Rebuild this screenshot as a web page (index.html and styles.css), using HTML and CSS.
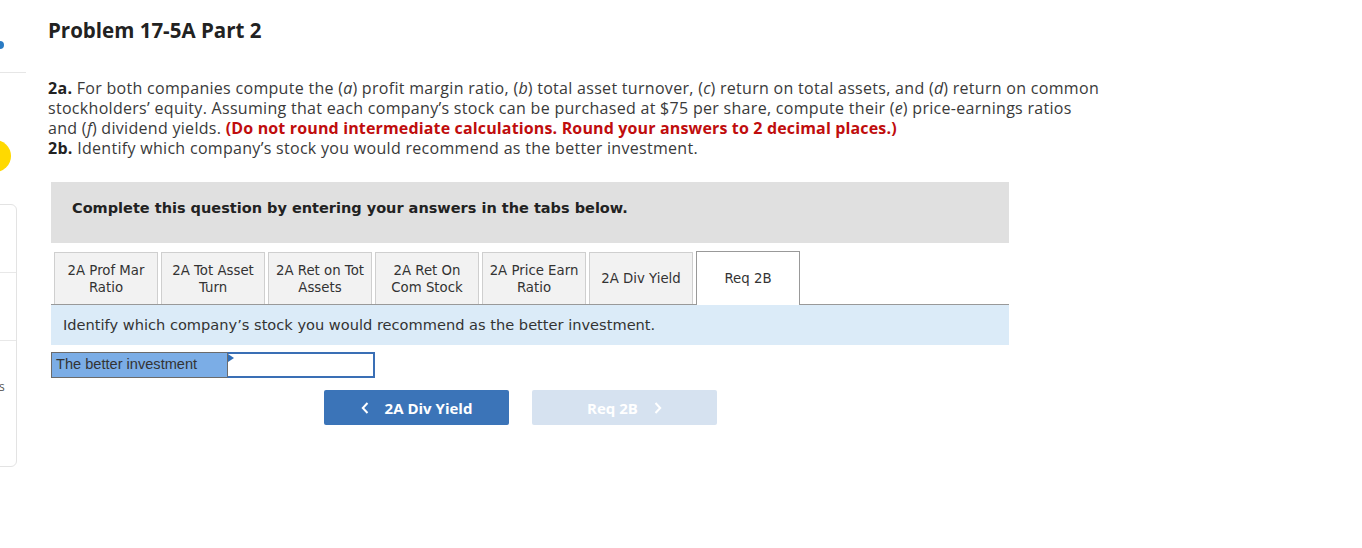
FILE: index.html
```html
<!DOCTYPE html>
<html lang="en">
<head>
<meta charset="utf-8">
<title>Problem 17-5A Part 2</title>
<link rel="stylesheet" href="styles.css">
</head>
<body>
<div class="page">
  <aside class="rail">
    <span class="dot"></span>
    <span class="rule"></span>
    <span class="sun"></span>
    <div class="card">
      <div class="cell"></div>
      <div class="cell"></div>
      <div class="cell last"><span class="s">s</span></div>
    </div>
  </aside>
  <main class="main">
    <h1 class="title">Problem 17-5A Part 2</h1>
    <p class="prompt"><b>2a.</b> For both companies compute the (<i>a</i>) profit margin ratio, (<i>b</i>) total asset turnover, (<i>c</i>) return on total assets, and (<i>d</i>) return on common stockholders’ equity. Assuming that each company’s stock can be purchased at $75 per share, compute their (<i>e</i>) price-earnings ratios and (<i>f</i>) dividend yields. <strong class="warn">(Do not round intermediate calculations. Round your answers to 2 decimal places.)</strong><br><b>2b.</b> Identify which company’s stock you would recommend as the better investment.</p>

    <section class="widget">
      <div class="banner">Complete this question by entering your answers in the tabs below.</div>
      <div class="tabs">
        <div class="tab">2A Prof Mar<br>Ratio</div>
        <div class="tab">2A Tot Asset<br>Turn</div>
        <div class="tab">2A Ret on Tot<br>Assets</div>
        <div class="tab">2A Ret On<br>Com Stock</div>
        <div class="tab">2A Price Earn<br>Ratio</div>
        <div class="tab">2A Div Yield</div>
        <div class="tab active">Req 2B</div>
      </div>
      <div class="info">Identify which company’s stock you would recommend as the better investment.</div>
      <div class="answer">
        <div class="label">The better investment</div>
        <div class="field"><span class="flag"></span></div>
      </div>
      <div class="nav">
        <button class="btn prev"><svg class="chev" width="8" height="12" viewBox="0 0 8 12"><path d="M6.5 1 L1.8 6 L6.5 11" fill="none" stroke="#fff" stroke-width="2"/></svg>2A Div Yield</button>
        <button class="btn next">Req 2B<svg class="chev" width="8" height="12" viewBox="0 0 8 12"><path d="M1.5 1 L6.2 6 L1.5 11" fill="none" stroke="#fff" stroke-width="2"/></svg></button>
      </div>
    </section>
  </main>
</div>
</body>
</html>
```

FILE: styles.css
```css
* { box-sizing: border-box; }
html, body { margin: 0; padding: 0; background: #fff; }
body { font-family: "Open Sans", "Liberation Sans", sans-serif; color: #333; overflow: hidden; }

.page { display: flex; width: 1362px; height: 548px; }

.rail { width: 48px; flex: none; display: flex; flex-direction: column; align-items: flex-start; }
.dot { display: block; width: 8px; height: 8px; border-radius: 50%; background: #2a7bc4; margin: 41px 0 0 -4px; }
.rule { display: block; width: 26px; height: 1px; background: #e6e6e6; margin-top: 23px; }
.sun { display: block; width: 32px; height: 32px; border-radius: 50%; background: #ffd900; margin: 67px 0 0 -21px; }
.card { width: 28px; margin: 32px 0 0 -11px; height: 263px; border: 1px solid #e3e3e3; border-radius: 6px; display: flex; flex-direction: column; }
.cell { height: 68px; border-bottom: 1px solid #e8e8e8; }
.cell.last { border-bottom: 0; flex: 1; padding: 37px 0 0 9px; font-size: 12px; color: #555; }

.main { flex: none; width: 1100px; }
.title { margin: 17px 0 0; font-size: 20.5px; font-weight: 700; color: #222; letter-spacing: 0; line-height: 26px; }
.prompt { margin: 35px 0 0; font-size: 16px; letter-spacing: 0.3px; line-height: 20px; color: #3a3a3a; width: 1054px; }
.prompt b { font-weight: 700; color: #222; }
.prompt i { letter-spacing: 0; }
.warn { color: #c00d0d; font-weight: 700; letter-spacing: 0.15px; }

.widget { margin-top: 24px; width: 958px; margin-left: 3px; }
.banner { background: #e0e0e0; height: 61px; padding: 18px 0 0 21px; font-family: "DejaVu Sans", Verdana, sans-serif; font-weight: 700; font-size: 14.5px; color: #222; }

.tabs { display: flex; align-items: flex-end; gap: 3px; margin-top: 8px; padding-left: 3px; border-bottom: 1px solid #999; }
.tab { width: 104px; height: 52px; background: #f2f2f2; border: 1px solid #cfcfcf; border-bottom: 0; display: flex; align-items: center; justify-content: center; text-align: center; font-family: "DejaVu Sans", Tahoma, sans-serif; font-size: 13.3px; line-height: 17px; color: #333; white-space: nowrap; }
.tab.active { background: #fff; border-color: #999; height: 54px; margin-bottom: -1px; }

.info { background: #dbebf8; height: 40px; padding: 11px 0 0 12px; font-family: "DejaVu Sans", Tahoma, sans-serif; font-size: 14.6px; color: #333; }

.answer { display: flex; margin-top: 7px; height: 26px; }
.label { width: 176px; background: #7badE6; border: 1px solid #6b6b6b; border-right: 0; padding: 3px 0 0 4px; font-family: "Liberation Sans", Arial, sans-serif; font-size: 14.6px; color: #333; }
.field { position: relative; width: 148px; background: #fff; border: 2px solid #3a6fb5; border-left: 1px solid #6b6b6b; box-shadow: inset 0 0 0 1px #fff; }
.flag { position: absolute; left: 0; top: 0; width: 0; height: 0; border-top: 4px solid transparent; border-bottom: 4px solid transparent; border-left: 6px solid #2f6db8; }

.nav { display: flex; gap: 23px; margin: 12px 0 0 273px; }
.btn { width: 185px; height: 35px; border: 0; border-radius: 2px; font-family: "Open Sans", "Liberation Sans", sans-serif; font-weight: 700; font-size: 15px; color: #fff; display: flex; align-items: center; justify-content: center; gap: 16px; padding: 0; }
.prev { background: #3b74b8; }
.next { background: #d6e2f0; }
```
